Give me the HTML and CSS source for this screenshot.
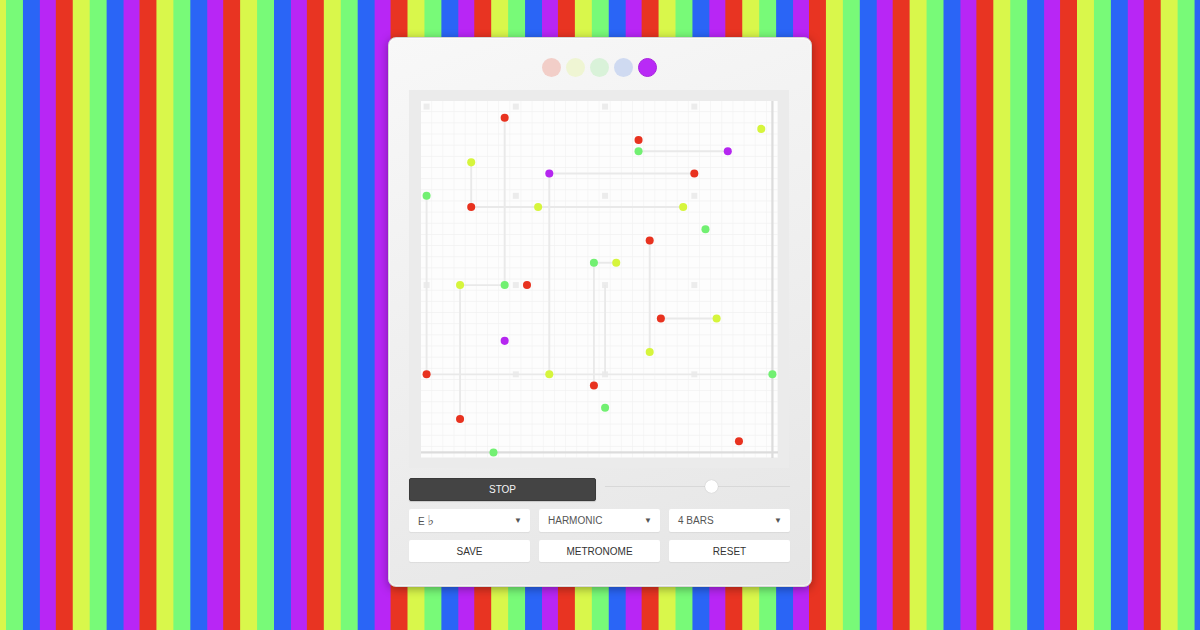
FILE: index.html
```html
<!DOCTYPE html>
<html>
<head>
<meta charset="utf-8">
<link rel="stylesheet" href="styles.css">
</head>
<body>
<div class="stage">
  <div class="panel">
    <div class="swatches">
      <span class="sw sw-red"></span>
      <span class="sw sw-yellow"></span>
      <span class="sw sw-green"></span>
      <span class="sw sw-blue"></span>
      <span class="sw sw-purple active"></span>
    </div>
    <div class="frame">
      <div class="board">
        <svg class="grid" width="357" height="357" viewBox="0 0 32 32">
          <defs>
            <pattern id="cell" width="1" height="1" patternUnits="userSpaceOnUse">
              <path d="M1 0V1H0" fill="none" stroke="#f1f1f1" stroke-width="0.11"/>
            </pattern>
          </defs>
          <rect x="0" y="0" width="32" height="32" fill="#fdfdfd"/>
          <rect x="0" y="0" width="32" height="32" fill="url(#cell)"/>
          <g fill="#ececec">
            <rect x="0.23" y="0.23" width="0.54" height="0.54"/><rect x="8.23" y="0.23" width="0.54" height="0.54"/><rect x="16.23" y="0.23" width="0.54" height="0.54"/><rect x="24.23" y="0.23" width="0.54" height="0.54"/>
            <rect x="0.23" y="8.23" width="0.54" height="0.54"/><rect x="8.23" y="8.23" width="0.54" height="0.54"/><rect x="16.23" y="8.23" width="0.54" height="0.54"/><rect x="24.23" y="8.23" width="0.54" height="0.54"/>
            <rect x="0.23" y="16.23" width="0.54" height="0.54"/><rect x="8.23" y="16.23" width="0.54" height="0.54"/><rect x="16.23" y="16.23" width="0.54" height="0.54"/><rect x="24.23" y="16.23" width="0.54" height="0.54"/>
            <rect x="0.23" y="24.23" width="0.54" height="0.54"/><rect x="8.23" y="24.23" width="0.54" height="0.54"/><rect x="16.23" y="24.23" width="0.54" height="0.54"/><rect x="24.23" y="24.23" width="0.54" height="0.54"/>
          </g>
          <g stroke="#e9e9e9" stroke-width="0.17" fill="none">
            <path d="M7.5 1.5V16.5"/>
            <path d="M19.5 4.5H27.5"/>
            <path d="M4.5 5.5V9.5"/>
            <path d="M11.5 6.5H24.5"/>
            <path d="M11.5 6.5V24.5"/>
            <path d="M0.5 8.5V24.5"/>
            <path d="M4.5 9.5H23.5"/>
            <path d="M20.5 12.5V22.5"/>
            <path d="M15.5 14.5H17.5"/>
            <path d="M15.5 14.5V25.5"/>
            <path d="M3.5 16.5H7.5"/>
            <path d="M3.5 16.5V28.5"/>
            <path d="M16.5 16.5V24.5"/>
            <path d="M21.5 19.5H26.5"/>
            <path d="M0.5 24.5H31.5"/>
          </g>
          <g stroke="#dcdcdc" stroke-width="0.2" fill="none">
            <path d="M31.5 0V32"/>
            <path d="M0 31.5H32"/>
          </g>
          <g class="dots">
            <circle cx="7.5" cy="1.5" r="0.36" fill="#e8321f"/>
            <circle cx="30.5" cy="2.5" r="0.36" fill="#d6f53c"/>
            <circle cx="19.5" cy="3.5" r="0.36" fill="#e8321f"/>
            <circle cx="19.5" cy="4.5" r="0.36" fill="#72f072"/>
            <circle cx="27.5" cy="4.5" r="0.36" fill="#b526f0"/>
            <circle cx="4.5" cy="5.5" r="0.36" fill="#d6f53c"/>
            <circle cx="11.5" cy="6.5" r="0.36" fill="#b526f0"/>
            <circle cx="24.5" cy="6.5" r="0.36" fill="#e8321f"/>
            <circle cx="0.5" cy="8.5" r="0.36" fill="#72f072"/>
            <circle cx="4.5" cy="9.5" r="0.36" fill="#e8321f"/>
            <circle cx="10.5" cy="9.5" r="0.36" fill="#d6f53c"/>
            <circle cx="23.5" cy="9.5" r="0.36" fill="#d6f53c"/>
            <circle cx="25.5" cy="11.5" r="0.36" fill="#72f072"/>
            <circle cx="20.5" cy="12.5" r="0.36" fill="#e8321f"/>
            <circle cx="15.5" cy="14.5" r="0.36" fill="#72f072"/>
            <circle cx="17.5" cy="14.5" r="0.36" fill="#d6f53c"/>
            <circle cx="3.5" cy="16.5" r="0.36" fill="#d6f53c"/>
            <circle cx="7.5" cy="16.5" r="0.36" fill="#72f072"/>
            <circle cx="9.5" cy="16.5" r="0.36" fill="#e8321f"/>
            <circle cx="21.5" cy="19.5" r="0.36" fill="#e8321f"/>
            <circle cx="26.5" cy="19.5" r="0.36" fill="#d6f53c"/>
            <circle cx="7.5" cy="21.5" r="0.36" fill="#b526f0"/>
            <circle cx="20.5" cy="22.5" r="0.36" fill="#d6f53c"/>
            <circle cx="0.5" cy="24.5" r="0.36" fill="#e8321f"/>
            <circle cx="11.5" cy="24.5" r="0.36" fill="#d6f53c"/>
            <circle cx="31.5" cy="24.5" r="0.36" fill="#72f072"/>
            <circle cx="15.5" cy="25.5" r="0.36" fill="#e8321f"/>
            <circle cx="16.5" cy="27.5" r="0.36" fill="#72f072"/>
            <circle cx="3.5" cy="28.5" r="0.36" fill="#e8321f"/>
            <circle cx="28.5" cy="30.5" r="0.36" fill="#e8321f"/>
            <circle cx="6.5" cy="31.5" r="0.36" fill="#72f072"/>
          </g>
        </svg>
      </div>
    </div>
    <div class="transport">
      <button class="stop">STOP</button>
      <div class="slider">
        <div class="track"></div>
        <div class="thumb"></div>
      </div>
    </div>
    <div class="row">
      <div class="select"><span>E <span class="flat">♭</span></span><span class="caret">▼</span></div>
      <div class="select"><span>HARMONIC</span><span class="caret">▼</span></div>
      <div class="select"><span>4 BARS</span><span class="caret">▼</span></div>
    </div>
    <div class="row">
      <button class="btn">SAVE</button>
      <button class="btn">METRONOME</button>
      <button class="btn">RESET</button>
    </div>
  </div>
</div>
</body>
</html>
```
FILE: styles.css
```css
html, body {
  margin: 0;
  padding: 0;
  width: 1200px;
  height: 630px;
  overflow: hidden;
}
body {
  font-family: "Liberation Sans", Arial, sans-serif;
  background-color: #e83422;
  background-image: repeating-linear-gradient(90deg,
    #78fa78 0, #78fa78 16.74px,
    #2a65f6 16.74px, #2a65f6 33.48px,
    #b826f5 33.48px, #b826f5 50.22px,
    #e83422 50.22px, #e83422 66.96px,
    #d9f74b 66.96px, #d9f74b 83.7px);
  background-position: 6px 0;
  background-size: 83.7px 630px;
}
.stage {
  display: flex;
  justify-content: center;
  padding-top: 37px;
}
.panel {
  width: 381px;
  height: 528px;
  padding: 20px 21px 0 20px;
  border-radius: 8px;
  border: 1px solid #d6d6d6;
  background: linear-gradient(160deg, #f8f8f8 0%, #eeeeee 55%, #e5e5e5 100%);
  box-shadow: 0 2px 10px rgba(0, 0, 0, 0.35), inset 0 0 0 1px rgba(255,255,255,0.6);
  display: flex;
  flex-direction: column;
}
.swatches {
  display: flex;
  justify-content: center;
  gap: 5px;
  height: 19px;
}
.sw {
  width: 19px;
  height: 19px;
  border-radius: 50%;
  box-sizing: border-box;
}
.sw-red { background: #f2cec8; }
.sw-yellow { background: #eff5d3; }
.sw-green { background: #d9f2d9; }
.sw-blue { background: #cfdaf1; }
.sw-purple { background: #b92af6; }
.sw.active { border: 1px solid #a722de; }
.frame {
  margin-top: 13px;
  width: 357px;
  padding: 11px 11px 10px 12px;
  background: #ebebeb;
  box-sizing: content-box;
  align-self: flex-start;
}
.board {
  width: 357px;
  height: 357px;
  background: #fff;
}
.grid {
  display: block;
}
.transport {
  margin-top: 10px;
  display: flex;
  align-items: center;
  gap: 9px;
  height: 23px;
}
.stop {
  width: 187px;
  height: 23px;
  background: #444;
  border: 1px solid #3a3a3a;
  border-radius: 2px;
  color: #f4f4f4;
  font-family: "Liberation Sans", Arial, sans-serif;
  font-size: 10px;
  padding: 0;
  box-shadow: 0 1px 1px rgba(0,0,0,0.15);
}
.slider {
  flex: 1;
  height: 23px;
  position: relative;
}
.track {
  position: absolute;
  left: 0;
  right: 0;
  top: 8px;
  height: 1px;
  background: #d8d8d8;
}
.thumb {
  position: absolute;
  left: 100px;
  top: 2px;
  width: 13px;
  height: 13px;
  border-radius: 50%;
  background: #fff;
  box-shadow: 0 0 1px rgba(0,0,0,0.25);
}
.row {
  margin-top: 8px;
  display: flex;
  gap: 9px;
}
.select {
  width: 121px;
  height: 23px;
  box-sizing: border-box;
  background: #fff;
  border-radius: 2px;
  display: flex;
  align-items: center;
  justify-content: space-between;
  padding: 0 8px 0 9px;
  font-size: 10px;
  color: #555;
  box-shadow: 0 1px 1px rgba(0,0,0,0.06);
}
.flat {
  font-family: "DejaVu Sans", sans-serif;
  font-size: 14px;
  line-height: 10px;
}
.caret {
  font-size: 8px;
  color: #555;
}
.btn {
  width: 121px;
  height: 22px;
  background: #fff;
  border: none;
  border-radius: 2px;
  padding: 0;
  font-family: "Liberation Sans", Arial, sans-serif;
  font-size: 10px;
  color: #333;
  box-shadow: 0 1px 1px rgba(0,0,0,0.06);
}
```
